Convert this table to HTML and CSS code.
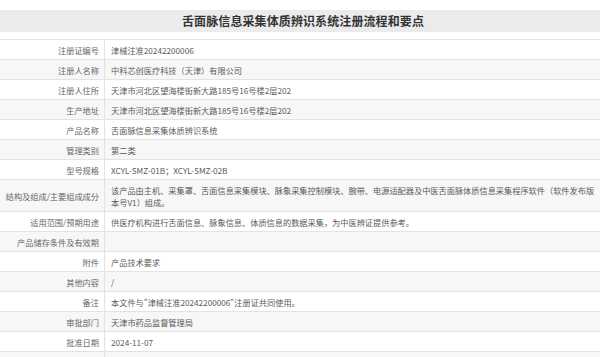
FILE: index.html
```html
<!DOCTYPE html>
<html lang="zh">
<head>
<meta charset="utf-8">
<title>舌面脉信息采集体质辨识系统注册流程和要点</title>
<link rel="stylesheet" href="styles.css">
</head>
<body>
<div class="page">
  <h1 class="title">舌面脉信息采集体质辨识系统注册流程和要点</h1>
  <div class="table">
    <div class="row"><div class="label">注册证编号</div><div class="value">津械注准20242200006</div></div>
    <div class="row alt"><div class="label">注册人名称</div><div class="value">中科芯创医疗科技（天津）有限公司</div></div>
    <div class="row"><div class="label">注册人住所</div><div class="value">天津市河北区望海楼街新大路185号16号楼2层202</div></div>
    <div class="row alt"><div class="label">生产地址</div><div class="value">天津市河北区望海楼街新大路185号16号楼2层202</div></div>
    <div class="row"><div class="label">产品名称</div><div class="value">舌面脉信息采集体质辨识系统</div></div>
    <div class="row alt"><div class="label">管理类别</div><div class="value">第二类</div></div>
    <div class="row"><div class="label">型号规格</div><div class="value">XCYL-SMZ-01B；XCYL-SMZ-02B</div></div>
    <div class="row alt"><div class="label">结构及组成/主要组成成分</div><div class="value">该产品由主机、采集罩、舌面信息采集模块、脉象采集控制模块、腕带、电源适配器及中医舌面脉体质信息采集程序软件（软件发布版本号V1）组成。</div></div>
    <div class="row"><div class="label">适用范围/预期用途</div><div class="value">供医疗机构进行舌面信息、脉象信息、体质信息的数据采集，为中医辨证提供参考。</div></div>
    <div class="row alt"><div class="label">产品储存条件及有效期</div><div class="value"></div></div>
    <div class="row"><div class="label">附件</div><div class="value">产品技术要求</div></div>
    <div class="row alt"><div class="label">其他内容</div><div class="value">/</div></div>
    <div class="row"><div class="label">备注</div><div class="value">本文件与"津械注准20242200006"注册证共同使用。</div></div>
    <div class="row alt"><div class="label">审批部门</div><div class="value">天津市药品监督管理局</div></div>
    <div class="row"><div class="label">批准日期</div><div class="value">2024-11-07</div></div>
    <div class="row alt"><div class="label"></div><div class="value"></div></div>
  </div>
</div>
</body>
</html>
```
FILE: styles.css
```css
html, body {
  margin: 0;
  padding: 0;
  background: #ffffff;
}
body {
  font-family: "Noto Sans CJK SC", "Noto Sans", sans-serif;
  overflow: hidden;
  height: 357px;
}
.page {
  padding-top: 10px;
}
.title {
  margin: 0;
  height: 22px;
  line-height: 22px;
  background: #ebebeb;
  text-align: center;
  font-size: 12px;
  font-weight: bold;
  color: #333333;
  letter-spacing: 0.1px;
  padding-left: 6px;
}
.table {
  margin-top: 7px;
  border-top: 1px solid #e3e3e3;
  font-size: 8.2px;
  line-height: 12px;
  color: #5a5a5a;
}
.row {
  display: grid;
  grid-template-columns: 104px 1fr;
  border-bottom: 1px solid #e3e3e3;
  background: #ffffff;
}
.row.alt {
  background: #f7f7f7;
}
.label {
  display: flex;
  align-items: center;
  justify-content: flex-end;
  padding: 3.5px 5px 3.5px 0;
  min-height: 12px;
  white-space: nowrap;
  color: #666666;
}
.value {
  border-left: 1px solid #e3e3e3;
  padding: 3.5px 2px 3.5px 6px;
  min-height: 12px;
}
```
